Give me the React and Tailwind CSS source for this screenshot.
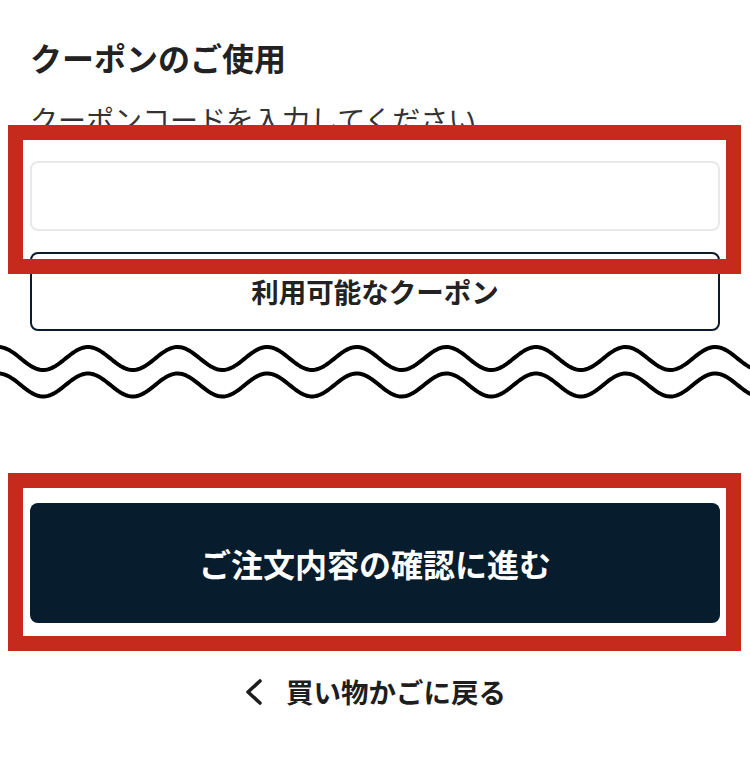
import React from "react";

const FONT = { fontFamily: '"Noto Sans CJK JP", "Noto Sans", sans-serif' };

// 波線: y = c - A * cos(2π(x - x0) / P)
function wavePath(c) {
  const A = 11.5;
  const P = 89.6;
  const x0 = 88;
  const pts = [];
  for (let x = -4; x <= 754; x += 2) {
    const y = c - A * Math.cos((2 * Math.PI * (x - x0)) / P);
    pts.push(`${x},${y.toFixed(2)}`);
  }
  return "M" + pts.join(" L");
}

export default function App() {
  return (
    <div className="relative h-[758px] w-[750px] overflow-hidden bg-white" style={FONT}>
      <div className="px-[30px]">
        <h2 className="pt-[37px] text-[32px] font-bold leading-[40px] text-[#222]">
          クーポンのご使用
        </h2>
        <p className="mt-[22px] text-[28px] leading-[40px] text-[#333]">
          クーポンコードを入力してください
        </p>
        <input
          type="text"
          className="mt-[22px] block h-[70px] w-full rounded-[8px] border-2 border-[#e8e8e8] bg-white px-4 text-[26px] outline-none"
        />
        <button
          type="button"
          className="mt-[21px] block h-[79px] w-full rounded-[8px] border-2 border-[#0a1c2c] bg-white text-[27.5px] font-bold text-[#222]"
        >
          利用可能なクーポン
        </button>
      </div>

      <svg className="mt-[12px] block h-[60px] w-[750px]" viewBox="0 0 750 60" fill="none">
        <path d={wavePath(15.5)} stroke="#000" strokeWidth="4" strokeLinejoin="round" />
        <path d={wavePath(42)} stroke="#000" strokeWidth="4" strokeLinejoin="round" />
      </svg>

      <div className="mt-[100px] px-[30px]">
        <button
          type="button"
          className="block h-[120px] w-full rounded-[8px] bg-[#071c2c] text-[32px] font-bold text-white"
        >
          ご注文内容の確認に進む
        </button>
      </div>

      <a
        href="#"
        className="mt-[49px] flex h-[40px] items-center justify-center gap-[22px] text-[27.5px] font-bold text-[#1e1e1e]"
      >
        <svg width="20" height="26" viewBox="0 0 20 26" fill="none">
          <path d="M16 2 L4 13 L16 24" stroke="#1e1e1e" strokeWidth="3.6" strokeLinecap="round" strokeLinejoin="round" />
        </svg>
        <span>買い物かごに戻る</span>
      </a>

      {/* 注釈の赤枠 */}
      <div className="pointer-events-none absolute left-[8px] top-[125px] h-[149px] w-[733px] border-[15px] border-[#c62a1d]" />
      <div className="pointer-events-none absolute left-[8px] top-[473px] h-[178px] w-[733px] border-[15px] border-[#c62a1d]" />
    </div>
  );
}
